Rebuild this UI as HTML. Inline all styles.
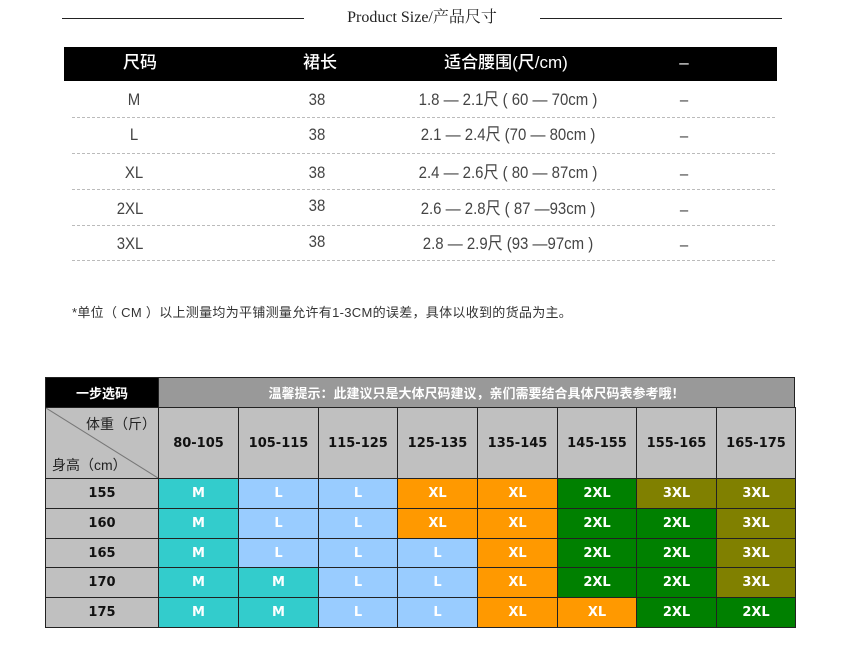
<!DOCTYPE html>
<html><head><meta charset="utf-8"><style>
body{margin:0;width:867px;height:654px;background:#fff;position:relative;overflow:hidden;font-family:"Liberation Sans","Noto Sans CJK SC",sans-serif;}
.a{position:absolute}
.hl{position:absolute;height:1px;background:#222;top:18px}
.t{position:absolute;top:4px;left:304px;width:236px;text-align:center;font-family:"Liberation Serif","Noto Serif CJK SC",serif;font-size:16px;color:#222}
.hdr{position:absolute;left:64px;top:47px;width:713px;height:34px;background:#000}
.c{position:absolute;transform:translateX(-50%) scaleX(.88);white-space:nowrap;line-height:20px;height:20px}
.hc{color:#fff;font-size:17px;top:53px;transform:translateX(-50%);font-weight:500}
.rc{color:#444;font-size:17px}
.dl{position:absolute;left:72px;width:703px;border-top:1px dashed #bbb}
.g{position:absolute;box-sizing:border-box;border:1px solid #222;display:flex;align-items:center;justify-content:center;font-weight:bold;font-size:13px;color:#fff;font-family:"DejaVu Sans","Noto Sans CJK SC",sans-serif}
</style></head><body>
<div class="hl" style="left:62px;width:242px"></div>
<div class="hl" style="left:540px;width:242px"></div>
<div class="t">Product Size/产品尺寸</div>
<div class="hdr"></div>
<div class="c hc" style="left:140px">尺码</div>
<div class="c hc" style="left:320px">裙长</div>
<div class="c hc" style="left:506px">适合腰围(尺/cm)</div>
<div class="c hc" style="left:684px">–</div>

<div class="c rc" style="left:134px;top:90px">M</div>
<div class="c rc" style="left:317px;top:90px">38</div>
<div class="c rc" style="left:508px;top:90px">1.8 — 2.1尺 ( 60 — 70cm )</div>
<div class="c rc" style="left:684px;top:90px">–</div>
<div class="dl" style="top:117px"></div>
<div class="c rc" style="left:134px;top:125px">L</div>
<div class="c rc" style="left:317px;top:125px">38</div>
<div class="c rc" style="left:508px;top:125px">2.1 — 2.4尺 (70 — 80cm )</div>
<div class="c rc" style="left:684px;top:126px">–</div>
<div class="dl" style="top:153px"></div>
<div class="c rc" style="left:134px;top:163px">XL</div>
<div class="c rc" style="left:317px;top:163px">38</div>
<div class="c rc" style="left:508px;top:163px">2.4 — 2.6尺 ( 80 — 87cm )</div>
<div class="c rc" style="left:684px;top:164px">–</div>
<div class="dl" style="top:189px"></div>
<div class="c rc" style="left:130px;top:199px">2XL</div>
<div class="c rc" style="left:317px;top:196px">38</div>
<div class="c rc" style="left:508px;top:199px">2.6 — 2.8尺 ( 87 —93cm )</div>
<div class="c rc" style="left:684px;top:200px">–</div>
<div class="dl" style="top:225px"></div>
<div class="c rc" style="left:130px;top:234px">3XL</div>
<div class="c rc" style="left:317px;top:232px">38</div>
<div class="c rc" style="left:508px;top:234px">2.8 — 2.9尺 (93 —97cm )</div>
<div class="c rc" style="left:684px;top:235px">–</div>
<div class="dl" style="top:260px"></div>

<div class="a" style="left:72px;top:302px;font-size:13px;letter-spacing:.3px;color:#333;white-space:nowrap">*单位（ CM ）以上测量均为平铺测量允许有1-3CM的误差，具体以收到的货品为主。</div>

<div class="a" style="left:45px;top:377px;width:750px;height:250px;border:1px solid #222;border-left-width:2px;border-top-width:2px;box-sizing:border-box"></div>
<div class="g" style="left:45px;top:377px;width:114px;height:31px;background:#000">一步选码</div>
<div class="g" style="left:158px;top:377px;width:637px;height:31px;background:#999">温馨提示：此建议只是大体尺码建议，亲们需要结合具体尺码表参考哦！</div>
<div class="g" style="left:45px;top:407px;width:114px;height:72px;background:#c0c0c0"></div>
<svg class="a" style="left:46px;top:408px" width="112" height="70"><line x1="0" y1="0" x2="112" y2="70" stroke="#777" stroke-width="1"/></svg>
<div class="a" style="left:86px;top:414px;font-size:14px;color:#222">体重（斤）</div>
<div class="a" style="left:52px;top:455px;font-size:14px;color:#222">身高（cm）</div>
<div id="grid"></div>
<script>
var xs=[158,238,318,397,477,557,636,716,795];
var hs=["80-105","105-115","115-125","125-135","135-145","145-155","155-165","165-175"];
var ys=[478,508,538,567,597,627];
var hts=["155","160","165","170","175"];
var C={M:"#33cccc",L:"#99ccff",XL:"#ff9900","2XL":"#008000","3XL":"#808000"};
var d=[["M","L","L","XL","XL","2XL","3XL","3XL"],["M","L","L","XL","XL","2XL","2XL","3XL"],["M","L","L","L","XL","2XL","2XL","3XL"],["M","M","L","L","XL","2XL","2XL","3XL"],["M","M","L","L","XL","XL","2XL","2XL"]];
var h="";
for(var i=0;i<8;i++)h+='<div class="g" style="left:'+xs[i]+'px;top:407px;width:'+(xs[i+1]-xs[i]+1)+'px;height:72px;background:#c0c0c0;color:#111">'+hs[i]+'</div>';
for(var r=0;r<5;r++){var hh=ys[r+1]-ys[r]+1;
h+='<div class="g" style="left:45px;top:'+ys[r]+'px;width:114px;height:'+hh+'px;background:#c0c0c0;color:#111">'+hts[r]+'</div>';
for(var i=0;i<8;i++)h+='<div class="g" style="left:'+xs[i]+'px;top:'+ys[r]+'px;width:'+(xs[i+1]-xs[i]+1)+'px;height:'+hh+'px;background:'+C[d[r][i]]+'">'+d[r][i]+'</div>';}
document.getElementById("grid").innerHTML=h;
</script>
</body></html>
